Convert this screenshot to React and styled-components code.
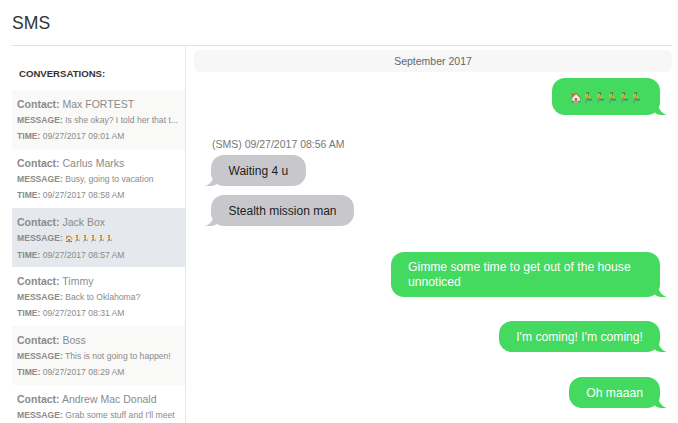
import React from 'react';
import styled, { createGlobalStyle } from 'styled-components';

const conversations = [
  { name: 'Max FORTEST', message: 'Is she okay? I told her that t...', time: '09/27/2017 09:01 AM', tone: 'odd' },
  { name: 'Carlus Marks', message: 'Busy, going to vacation', time: '09/27/2017 08:58 AM', tone: 'even' },
  { name: 'Jack Box', message: '🏠🏃🏃🏃🏃🏃', emoji: true, time: '09/27/2017 08:57 AM', tone: 'active' },
  { name: 'Timmy', message: 'Back to Oklahoma?', time: '09/27/2017 08:31 AM', tone: 'even' },
  { name: 'Boss', message: 'This is not going to happen!', time: '09/27/2017 08:29 AM', tone: 'odd' },
  { name: 'Andrew Mac Donald', message: "Grab some stuff and I'll meet", time: '09/27/2017 08:12 AM', tone: 'even' },
];

const App = () => {
  return (
    <>
      <GlobalStyle />
      <Page>
        <Title>SMS</Title>
        <Body>
          <Sidebar>
            <SidebarTitle>CONVERSATIONS:</SidebarTitle>
            {conversations.map((item) => (
              <Conversation key={item.name} tone={item.tone}>
                <Contact><b>Contact:</b> {item.name}</Contact>
                <Detail>
                  <b>MESSAGE:</b> {item.emoji ? <SmallEmoji>{item.message}</SmallEmoji> : item.message}
                </Detail>
                <Detail><b>TIME:</b> {item.time}</Detail>
              </Conversation>
            ))}
          </Sidebar>
          <Thread>
            <DayLabel>September 2017</DayLabel>
            <EmojiBubble>🏠🏃🏃🏃🏃🏃</EmojiBubble>
            <Stamp>(SMS) 09/27/2017 08:56 AM</Stamp>
            <Incoming>Waiting 4 u</Incoming>
            <Incoming second>Stealth mission man</Incoming>
            <WideOutgoing top={26}>Gimme some time to get out of the house unnoticed</WideOutgoing>
            <Outgoing top={24}>I'm coming! I'm coming!</Outgoing>
            <Outgoing top={25}>Oh maaan</Outgoing>
          </Thread>
        </Body>
      </Page>
    </>
  );
};

const GlobalStyle = createGlobalStyle`
  html, body {
    margin: 0;
    background: #fff;
    overflow: hidden;
  }
  body {
    font-family: "Liberation Sans", Arial, sans-serif;
  }
`;
const Page = styled.div`
  height: 423px;
  padding: 0 6px 0 12px;
  box-sizing: border-box;
  overflow: hidden;
`;
const Title = styled.h1`
  height: 45px;
  margin: 0;
  border-bottom: 1px solid #e2e2e2;
  box-sizing: content-box;
  font-size: 17.6px;
  font-weight: 400;
  line-height: 46px;
  color: #333;
`;
const Body = styled.div`
  display: flex;
  height: 377px;
`;
const Sidebar = styled.div`
  flex: 0 0 173px;
  border-right: 1px solid #e6e6e6;
  overflow: hidden;
`;
const SidebarTitle = styled.h2`
  height: 44px;
  margin: 0;
  padding: 0 0 0 7px;
  font-size: 9.6px;
  font-weight: 700;
  line-height: 55px;
  color: #333;
`;
const Conversation = styled.div`
  height: 59px;
  padding: 6px 0 0 5px;
  box-sizing: border-box;
  color: #8b8b8b;
  background: ${(props) =>
    props.tone === 'active' ? '#e5e8ec' : props.tone === 'odd' ? '#f9f9f8' : '#fff'};
  b {
    font-weight: 700;
  }
`;
const Contact = styled.div`
  font-size: 10.5px;
  line-height: 16px;
  white-space: nowrap;
`;
const Detail = styled.div`
  font-size: 8.6px;
  line-height: 16px;
  white-space: nowrap;
  overflow: hidden;
`;
const SmallEmoji = styled.span`
  font-size: 6.6px;
`;
const Thread = styled.div`
  flex: 1;
  display: flex;
  flex-direction: column;
  padding: 4px 0 0 8px;
  min-width: 0;
`;
const DayLabel = styled.div`
  height: 22px;
  flex: none;
  border-radius: 6px;
  background: #f7f7f7;
  font-size: 10.5px;
  line-height: 22px;
  text-align: center;
  color: #666;
`;
const Stamp = styled.div`
  margin: 22px 0 0 18px;
  font-size: 10.5px;
  line-height: 14px;
  color: #777;
`;
const Bubble = styled.div`
  position: relative;
  box-sizing: border-box;
  font-size: 12px;
  line-height: 14px;
  border-radius: 13px;
`;
const Outgoing = styled(Bubble)`
  align-self: flex-end;
  margin: ${(props) => props.top ?? 6}px 12px 0 0;
  padding: 9px 17px 8px;
  font-size: 12.15px;
  background: #44d95f;
  color: #fff;
  &::after {
    content: '';
    position: absolute;
    right: -7px;
    bottom: 0;
    width: 12px;
    height: 10px;
    background: #44d95f;
    clip-path: path('M3 0 C4 5 8 9 12 10 C8 10.5 3 10 0 8 Z');
  }
`;
const WideOutgoing = styled(Outgoing)`
  width: 269px;
  padding: 8px 17px 7px;
  line-height: 15px;
`;
const EmojiBubble = styled(Outgoing)`
  padding: 13px 18px 11px;
  font-size: 9.7px;
  line-height: 13px;
`;
const Incoming = styled(Bubble)`
  align-self: flex-start;
  margin: ${(props) => (props.second ? 9 : 4)}px 0 0 17px;
  padding: 9px 17.5px 8px;
  background: #c8c8cc;
  color: #222;
  &::after {
    content: '';
    position: absolute;
    left: -6px;
    bottom: 0;
    width: 12px;
    height: 10px;
    background: #c8c8cc;
    clip-path: path('M9 0 C8 5 4 9 0 10 C4 10.5 9 10 12 8 Z');
  }
`;

export default App;
